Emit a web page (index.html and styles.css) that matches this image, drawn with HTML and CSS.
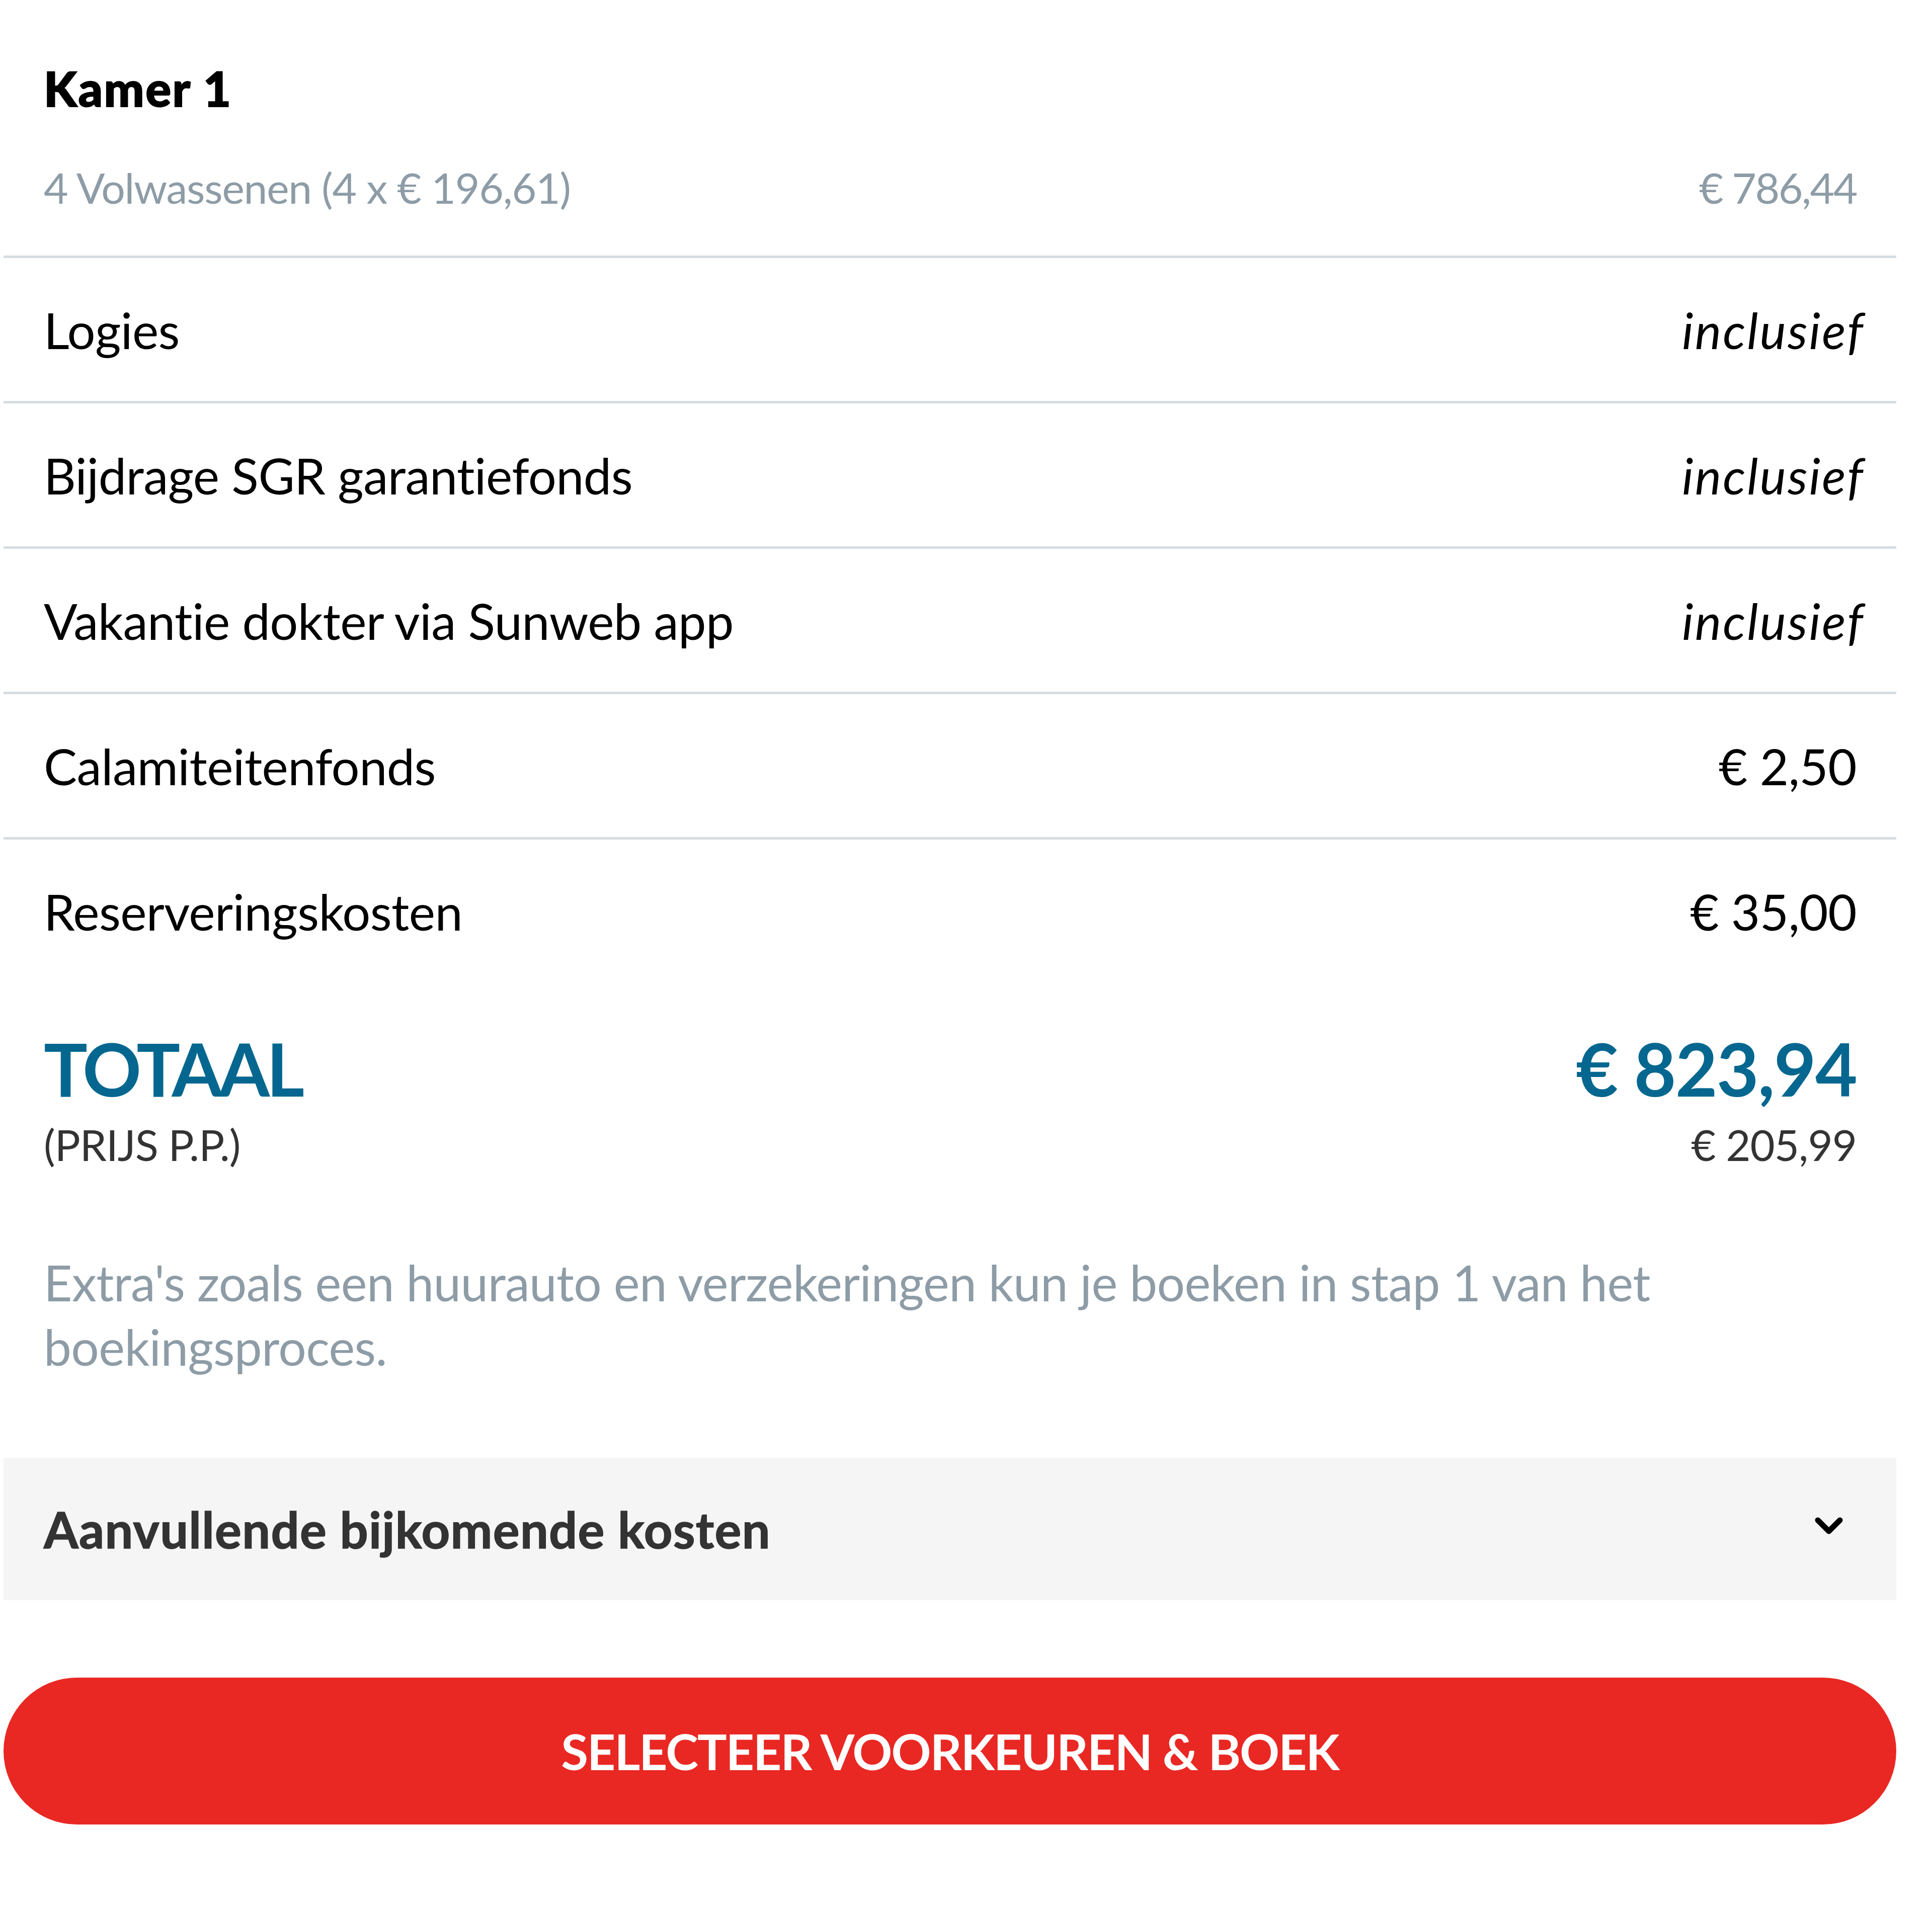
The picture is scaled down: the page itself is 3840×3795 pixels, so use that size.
FILE: index.html
```html
<!DOCTYPE html>
<html lang="nl">
<head>
<meta charset="utf-8">
<title>Prijsoverzicht</title>
<link rel="stylesheet" href="styles.css">
</head>
<body>
<div class="summary">
  <div class="room-head">
    <div class="room-title">Kamer 1</div>
    <div class="room-sub">
      <span>4 Volwassenen (4 x € 196,61)</span>
      <span class="sub-price">€ 786,44</span>
    </div>
  </div>

  <div class="row"><span>Logies</span><span class="incl">inclusief</span></div>
  <div class="row"><span>Bijdrage SGR garantiefonds</span><span class="incl">inclusief</span></div>
  <div class="row"><span>Vakantie dokter via Sunweb app</span><span class="incl">inclusief</span></div>
  <div class="row"><span>Calamiteitenfonds</span><span>€ 2,50</span></div>
  <div class="row row-last"><span>Reserveringskosten</span><span>€ 35,00</span></div>

  <div class="total">
    <div class="total-line">
      <span class="total-label">TOTAAL</span>
      <span>€ 823,94</span>
    </div>
    <div class="pp-line">
      <span>(PRIJS P.P.)</span>
      <span>€ 205,99</span>
    </div>
  </div>

  <p class="note">Extra's zoals een huurauto en verzekeringen kun je boeken in stap 1 van het boekingsproces.</p>

  <div class="extra-costs">
    <span>Aanvullende bijkomende kosten</span>
    <svg class="chevron" width="56" height="36" viewBox="0 0 56 36" aria-hidden="true">
      <polyline points="6,6 28,28 50,6" fill="none" stroke="#000" stroke-width="11" stroke-linecap="round" stroke-linejoin="round"/>
    </svg>
  </div>

  <button class="book-btn" type="button">SELECTEER VOORKEUREN &amp; BOEK</button>
</div>
</body>
</html>
```

FILE: styles.css
```css
* { box-sizing: border-box; }

html, body {
  margin: 0;
  padding: 0;
  background: #ffffff;
}

body {
  font-family: Lato, "Noto Sans", "Liberation Sans", sans-serif;
  color: #000;
}

.summary {
  width: 3762px;
  margin-left: 7px;
}

.room-head {
  height: 513px;
  padding: 128px 79px 0 80px;
  border-bottom: 5px solid #d6dde1;
}

.room-title {
  font-size: 95px;
  line-height: 1;
  font-weight: 900;
  height: 94px;
  letter-spacing: 2.5px;
  -webkit-text-stroke: 2px #000;
}

.room-sub {
  margin-top: 109px;
  display: flex;
  justify-content: space-between;
  font-size: 84px;
  line-height: 1;
  color: #8d9ca6;
  letter-spacing: -1.2px;
}

.sub-price {
  letter-spacing: -2.5px;
}

.row {
  height: 289px;
  padding: 0 79px 0 80px;
  display: flex;
  align-items: center;
  justify-content: space-between;
  border-bottom: 5px solid #d6dde1;
  font-size: 99px;
  line-height: 1;
  letter-spacing: -0.6px;
}

.row-last {
  border-bottom: none;
  height: 284px;
}

.incl {
  font-style: italic;
  letter-spacing: 3px;
  margin-right: -16px;
}

.total {
  padding: 99px 79px 0 80px;
}

.total-line {
  display: flex;
  justify-content: space-between;
  font-size: 145px;
  line-height: 1;
  font-weight: 700;
  color: #05678f;
  letter-spacing: -2px;
}

.total-label {
  letter-spacing: -6.5px;
}

.pp-line {
  margin-top: 36px;
  display: flex;
  justify-content: space-between;
  font-size: 85px;
  line-height: 1;
  color: #333333;
  letter-spacing: -1px;
}

.note {
  margin: 167px 0 0 0;
  padding: 0 79px 0 80px;
  font-size: 98px;
  line-height: 128px;
  color: #8d9ca6;
  letter-spacing: -0.6px;
}

.extra-costs {
  margin-top: 157px;
  height: 283px;
  background: #f5f5f5;
  display: flex;
  align-items: center;
  justify-content: space-between;
  padding: 0 106px 0 80px;
  font-size: 99px;
  line-height: 1;
  font-weight: 700;
  color: #333333;
  letter-spacing: 1.3px;
  -webkit-text-stroke: 1.5px #333333;
}

.chevron {
  display: block;
  margin-top: -12px;
}

.book-btn {
  display: block;
  width: 100%;
  margin-top: 154px;
  height: 292px;
  border: none;
  border-radius: 146px;
  background: #e92823;
  color: #ffffff;
  font-family: Lato, "Noto Sans", "Liberation Sans", sans-serif;
  font-size: 98px;
  font-weight: 700;
  line-height: 1;
  letter-spacing: -2px;
  padding: 0;
}
```
